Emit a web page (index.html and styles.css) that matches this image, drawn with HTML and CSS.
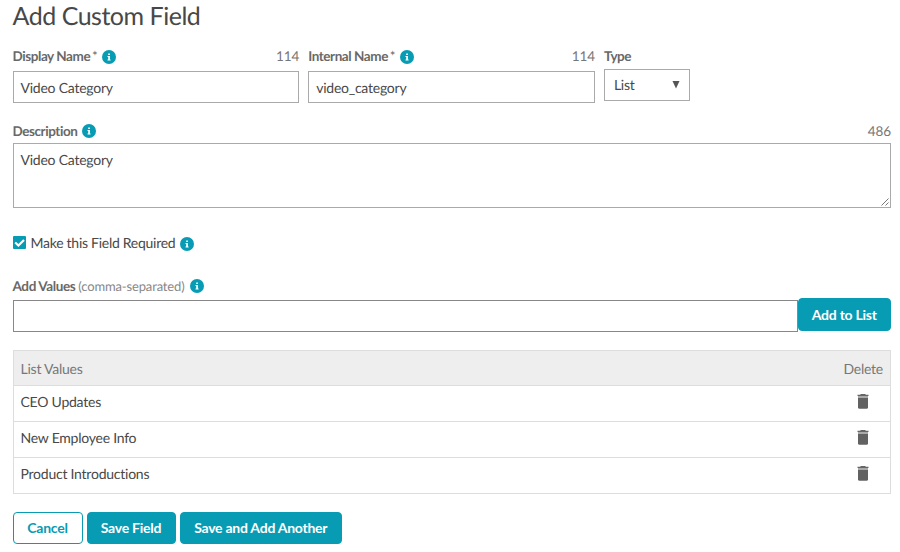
FILE: index.html
```
<!DOCTYPE html>
<html lang="en">
<head>
<meta charset="utf-8">
<title>Add Custom Field</title>
<link rel="stylesheet" href="styles.css">
</head>
<body>
<svg class="defs" width="0" height="0" aria-hidden="true">
  <symbol id="info" viewBox="0 0 14 14"><circle cx="7" cy="7" r="7" fill="#089bb4"/><path d="M6.200 3.500h1.700v1.500H6.200zM5.500 6H7.900v3.500h.7v1H5.500v-1h.7V7h-.7z" fill="#fff"/></symbol>
  <symbol id="trash" viewBox="0 0 12 15"><path d="M3.800 0h4.400l.6.700H11.500V2H.5V.7h2.700z" fill="#666"/><path d="M1 2h10v1.700H1z" fill="#aaa"/><path d="M1 3.700h10v9.500q0 1.500-1.500 1.500h-7Q1 14.700 1 13.200z" fill="#626262"/></symbol>
</svg>
<main class="page">
  <h1>Add Custom Field</h1>
  <div class="fields">
    <div class="field name">
      <div class="label"><b>Display Name <i>*</i></b><svg class="info"><use href="#info"/></svg><span class="count">114</span></div>
      <div class="input">Video Category</div>
    </div>
    <div class="field name">
      <div class="label"><b>Internal Name <i>*</i></b><svg class="info"><use href="#info"/></svg><span class="count">114</span></div>
      <div class="input">video_category</div>
    </div>
    <div class="field type">
      <div class="label"><b>Type</b></div>
      <div class="select"><span>List</span><svg width="8" height="8" viewBox="0 0 8 8"><path d="M.5 0h7L4 7.500z" fill="#555"/></svg></div>
    </div>
  </div>
  <div class="label description"><b>Description</b><svg class="info"><use href="#info"/></svg><span class="count">486</span></div>
  <div class="textarea"><span>Video Category</span><svg class="grip" width="8" height="8" viewBox="0 0 8 8"><path d="M.5 7.500l7-7M4.500 7.500l3-3" stroke="#777" fill="none"/></svg></div>
  <div class="required"><svg class="check" width="13" height="13" viewBox="0 0 13 13"><rect width="13" height="13" rx="1" fill="#089bb4"/><path d="M2.200 6.500l3.200 3 5.600-5.500" stroke="#fff" stroke-width="2.200" fill="none"/></svg><span>Make this Field Required</span><svg class="info"><use href="#info"/></svg></div>
  <div class="label values"><b>Add Values</b><span class="hint">(comma-separated)</span><svg class="info"><use href="#info"/></svg></div>
  <div class="addrow"><div class="input"></div><button class="btn">Add to List</button></div>
  <div class="list">
    <div class="row head"><span>List Values</span><span>Delete</span></div>
    <div class="row"><span>CEO Updates</span><svg class="trash"><use href="#trash"/></svg></div>
    <div class="row"><span>New Employee Info</span><svg class="trash"><use href="#trash"/></svg></div>
    <div class="row"><span>Product Introductions</span><svg class="trash"><use href="#trash"/></svg></div>
  </div>
  <div class="actions"><button class="btn cancel">Cancel</button><button class="btn save">Save Field</button><button class="btn another">Save and Add Another</button></div>
</main>
</body>
</html>
```
FILE: styles.css
```
* { box-sizing: border-box; }
body { margin: 0; background: #fff; color: #484848; font: 14px/20px Lato, "Liberation Sans", sans-serif; letter-spacing: -.24px; text-rendering: geometricPrecision; font-variant-ligatures: none; }
.defs { display: block; }
.page { padding: 0 9px 0 12.5px; height: 552px; overflow: hidden; }
h1 { margin: 0; height: 46px; font-size: 25px; line-height: 32px; font-weight: 400; letter-spacing: -.48px; }
.fields { display: flex; gap: 9px; height: 74.5px; }
.name { width: 286.700px; }
.type { width: 86px; }
.label { display: flex; align-items: center; height: 20px; color: #686868; font-size: 13.500px; }
.label b { font-weight: 700; letter-spacing: -.43px; }
.label i { margin-left: -1px; font-style: normal; font-weight: 400; }
.info { width: 14px; height: 14px; margin: 1px 0 0 5px; flex: none; }
.count { margin-left: auto; color: #777; letter-spacing: -.1px; }
.input { height: 32px; margin-top: 5px; padding: 0 7px; border: 1px solid #aaa; line-height: 31px; }
.select { display: flex; align-items: center; justify-content: space-between; height: 32px; margin-top: 3px; padding: 0 9px; border: 1px solid #aaa; }
.textarea { display: flex; justify-content: space-between; align-items: flex-end; height: 65px; margin-top: 2.500px; border: 1px solid #aaa; padding: 6px 1px 1px 7px; }
.textarea span { align-self: flex-start; }
.required { display: flex; align-items: center; height: 20px; margin-top: 25px; }
.required span { letter-spacing: -.27px; }
.check { margin: -1px 5px 0 0; }
.values { margin-top: 22.500px; }
.values b { letter-spacing: -.38px; }
.hint { margin-left: 3px; color: #888; font-size: 13px; letter-spacing: -.15px; }
.addrow { display: flex; height: 34px; margin-top: 2.500px; }
.addrow .input { flex: 1; margin-top: 2px; border-color: #888; }
.btn { height: 32.500px; padding: 0; border: 1px solid #089bb4; border-radius: 4px; background: #089bb4; color: #fff; font: 700 14px/31px Lato, "Liberation Sans", sans-serif; letter-spacing: -.25px; }
.addrow .btn { width: 93.500px; }
.list { margin-top: 18px; border: 1px solid #ddd; }
.row { display: flex; justify-content: space-between; height: 36px; padding: 0 8px 0 7px; line-height: 32px; border-bottom: 1px solid #ddd; }
.row:last-child { border-bottom: 0; height: 35px; }
.head { height: 35px; padding-right: 7px; background: #eee; color: #777; line-height: 36px; }
.trash { width: 12px; height: 15px; margin: 8px 13px 0 0; }
.actions { display: flex; gap: 4px; margin-top: 18px; }
.actions .btn { height: 32px; line-height: 30px; }
.cancel { width: 70px; background: #fff; color: #089bb4; }
.save { width: 89px; }
.another { width: 162.500px; }
```
